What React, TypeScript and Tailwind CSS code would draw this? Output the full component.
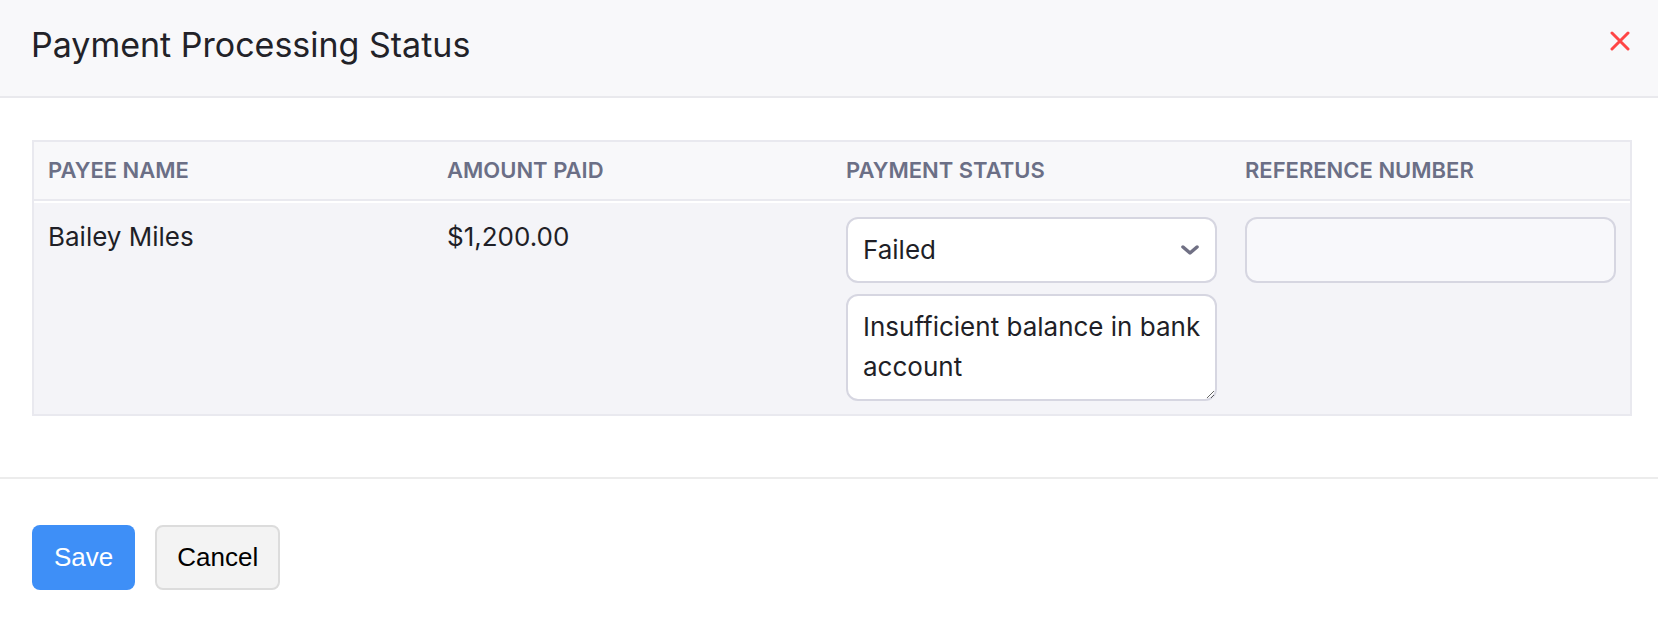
import React from "react";

const columns = ["Payee Name", "Amount Paid", "Payment Status", "Reference Number"];

function CloseIcon() {
  return (
    <svg width="20" height="20" viewBox="0 0 20 20" fill="none">
      <path d="M2 2 L18 18 M18 2 L2 18" stroke="#ff4545" strokeWidth="3" strokeLinecap="round" />
    </svg>
  );
}

function Chevron() {
  return (
    <svg width="18" height="10" viewBox="0 0 18 10" fill="none">
      <path d="M2 2 L9 8 L16 2" stroke="#707084" strokeWidth="3.5" strokeLinecap="round" strokeLinejoin="round" />
    </svg>
  );
}

export default function App() {
  return (
    <div className="w-[1658px] h-[624px] bg-white font-['Inter','Noto_Sans',sans-serif] text-[#1f1f27]">
      {/* Header */}
      <div className="h-[98px] bg-[#f8f8fa] border-b-2 border-[#e9e9ed] flex items-start justify-between pl-[31px] pr-[28px]">
        <h1 className="mt-[28px] text-[34px] leading-none font-normal text-[#222228]">
          Payment Processing Status
        </h1>
        <button className="mt-[31px]">
          <CloseIcon />
        </button>
      </div>

      {/* Body */}
      <div className="pt-[42px] pb-[61px] pl-[32px]">
        <div className="w-[1600px] border-2 border-[#e9e9ef] bg-white flex flex-col gap-[2px]">
          <div className="grid grid-cols-4 h-[59px] bg-[#f8f8fa] border-b-2 border-[#e9e9ef]">
            {columns.map((c) => (
              <div
                key={c}
                className="px-[14px] flex items-center text-[22px] font-semibold uppercase text-[#6b6f86]"
              >
                {c}
              </div>
            ))}
          </div>

          <div className="grid grid-cols-4 bg-[#f4f4f8] text-[26px] leading-[40px]">
            <div className="px-[14px] pt-[14px]">Bailey Miles</div>
            <div className="px-[14px] pt-[14px]">$1,200.00</div>
            <div className="px-[14px] pt-[14px] pb-[13px] flex flex-col gap-[11px]">
              <div className="h-[66px] border-2 border-[#d6d6e1] rounded-[12px] bg-white flex items-center justify-between pl-[15px] pr-[16px]">
                <span>Failed</span>
                <Chevron />
              </div>
              <textarea
                className="h-[107px] border-2 border-[#d6d6e1] rounded-[12px] bg-white pl-[15px] pr-[12px] pt-[11px] text-[26px] leading-[40px] outline-none"
                defaultValue="Insufficient balance in bank account"
              />
            </div>
            <div className="px-[14px] pt-[14px]">
              <div className="h-[66px] border-2 border-[#d6d6e1] rounded-[12px] bg-[#f8f8fb]" />
            </div>
          </div>
        </div>
      </div>

      {/* Footer */}
      <div className="border-t-2 border-[#ececec] pt-[46px] pl-[32px] flex gap-[20px] font-['Liberation_Sans',Arial,sans-serif] text-[26px]">
        <button className="h-[65px] px-[22px] rounded-[8px] bg-[#3e8ff7] text-white">Save</button>
        <button className="h-[65px] px-[20px] rounded-[8px] border-2 border-[#dcdcdc] bg-[#f3f3f3] text-black">
          Cancel
        </button>
      </div>
    </div>
  );
}
